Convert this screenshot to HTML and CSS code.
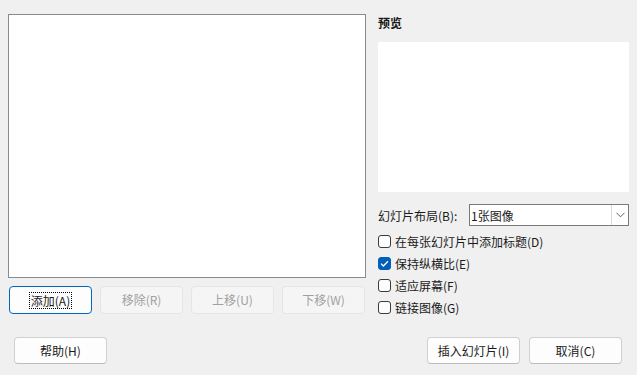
FILE: index.html
```html
<!DOCTYPE html>
<html lang="zh-CN">
<head>
<meta charset="utf-8">
<link rel="stylesheet" href="styles.css">
</head>
<body>
<div class="dialog">
  <div class="main">
    <div class="left">
      <div class="listbox"></div>
      <div class="btnrow">
        <button class="btn small primary"><span class="focus">添加(A)</span></button>
        <button class="btn small" disabled>移除(R)</button>
        <button class="btn small" disabled>上移(U)</button>
        <button class="btn small" disabled>下移(W)</button>
      </div>
    </div>
    <div class="right">
      <div class="title">预览</div>
      <div class="preview"></div>
      <div class="layout-row">
        <span class="label">幻灯片布局(B):</span>
        <div class="select">
          <span class="value">1张图像</span>
          <span class="arrow"><svg width="9" height="6" viewBox="0 0 9 6"><path d="M0.5 0.8 L4.5 4.8 L8.5 0.8" fill="none" stroke="#606060" stroke-width="1"/></svg></span>
        </div>
      </div>
      <div class="checks">
        <label class="check"><span class="box"></span>在每张幻灯片中添加标题(D)</label>
        <label class="check"><span class="box on"><svg width="9" height="7" viewBox="0 0 9 7"><path d="M1 3.6 L3.4 6 L8 1.2" fill="none" stroke="#fff" stroke-width="1.3"/></svg></span>保持纵横比(E)</label>
        <label class="check"><span class="box"></span>适应屏幕(F)</label>
        <label class="check"><span class="box"></span>链接图像(G)</label>
      </div>
    </div>
  </div>
  <div class="footer">
    <button class="btn wide">帮助(H)</button>
    <div class="footer-right">
      <button class="btn wide">插入幻灯片(I)</button>
      <button class="btn wide">取消(C)</button>
    </div>
  </div>
</div>
</body>
</html>
```
FILE: styles.css
```css
* { box-sizing: border-box; }
html, body {
  margin: 0;
  padding: 0;
  background: #f0f0f0;
  width: 637px;
  height: 375px;
  overflow: hidden;
}
body {
  font-family: "Noto Sans CJK SC", "Noto Sans", sans-serif;
  font-size: 12px;
  color: #1a1a1a;
}
.dialog {
  padding: 14px 0 0 8px;
}
.main {
  display: flex;
  gap: 12px;
}
.left {
  width: 358px;
}
.listbox {
  width: 358px;
  height: 264px;
  background: #fff;
  border: 1px solid #868a91;
}
.btnrow {
  display: flex;
  gap: 8px;
  margin-top: 8px;
  padding-left: 1px;
}
.btn {
  font-family: inherit;
  font-size: 12px;
  color: #1a1a1a;
  background: #fdfdfd;
  border: 1px solid #d0d0d0;
  border-bottom-color: #bcbcbc;
  border-radius: 4px;
  padding: 0;
  display: flex;
  align-items: center;
  justify-content: center;
  line-height: 16px;
}
.btn.small {
  width: 83px;
  height: 28px;
}
.btn.wide {
  width: 93px;
  height: 27px;
}
.btn.primary {
  border: 1px solid #0067c0;
}
.btn:disabled {
  color: #a0a0a0;
  background: #f5f5f5;
  border-color: #e5e5e5;
}
.focus {
  outline: 1px dotted #000;
  padding: 0 1px;
  line-height: 15px;
}
.right {
  width: 251px;
}
.title {
  font-weight: bold;
  line-height: 16px;
  margin-top: 1px;
}
.preview {
  margin-top: 11px;
  height: 150px;
  background: #fff;
}
.layout-row {
  display: flex;
  align-items: center;
  margin-top: 12px;
  height: 22px;
}
.label {
  flex: 1;
}
.select {
  width: 160px;
  height: 22px;
  background: #fff;
  border: 1px solid #7a7a7a;
  display: flex;
  align-items: center;
}
.select .value {
  flex: 1;
  padding-left: 1px;
}
.arrow {
  width: 17px;
  height: 20px;
  border-left: 1px solid #d9d9d9;
  display: flex;
  align-items: center;
  justify-content: center;
}
.checks {
  margin-top: 4px;
  display: flex;
  flex-direction: column;
}
.check {
  display: flex;
  align-items: center;
  height: 22px;
  gap: 4px;
}
.box {
  width: 13px;
  height: 13px;
  border: 1px solid #3b3b3b;
  border-radius: 3px;
  background: #fdfdfd;
  display: flex;
  align-items: center;
  justify-content: center;
}
.box.on {
  background: #005fb8;
  border-color: #005fb8;
}
.footer {
  display: flex;
  justify-content: space-between;
  margin-top: 19px;
  padding: 0 15px 0 6px;
}
.footer-right {
  display: flex;
  gap: 9px;
}
```
